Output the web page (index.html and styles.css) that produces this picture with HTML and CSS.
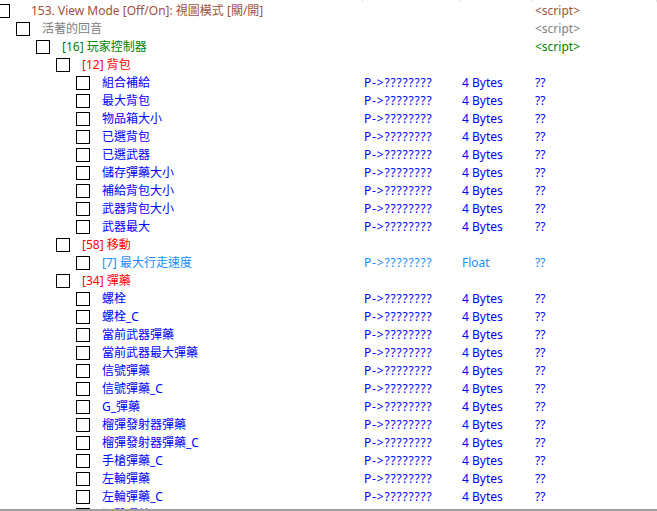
FILE: index.html
```html
<!DOCTYPE html>
<html lang="zh-Hant">
  <head>
    <meta charset="UTF-8" />
    <title>Cheat Table</title>
    <link rel="stylesheet" href="styles.css">
  </head>
  <body>
    <div class="table">
      <div class="head">
        <div class="hcell"></div>
        <div class="hcell"></div>
        <div class="hcell"></div>
        <div class="hcell"></div>
      </div>

      <div class="row lv0 c-script">
        <div class="desc"><span class="box"></span><span class="label">153. View Mode [Off/On]: 視圖模式 [關/開]</span></div>
        <div></div><div></div><div class="val">&lt;script&gt;</div>
      </div>
      <div class="row lv1 c-gray">
        <div class="desc"><span class="box"></span><span class="label">活著的回音</span></div>
        <div></div><div></div><div class="val">&lt;script&gt;</div>
      </div>
      <div class="row lv2 c-green">
        <div class="desc"><span class="box"></span><span class="label">[16] 玩家控制器</span></div>
        <div></div><div></div><div class="val">&lt;script&gt;</div>
      </div>
      <div class="row lv3 c-red">
        <div class="desc"><span class="box"></span><span class="label">[12] 背包</span></div>
      </div>

      <div class="row lv4 c-blue"><div class="desc"><span class="box"></span><span class="label">組合補給</span></div><div class="addr">P-&gt;????????</div><div class="type">4 Bytes</div><div class="val">??</div></div>
      <div class="row lv4 c-blue"><div class="desc"><span class="box"></span><span class="label">最大背包</span></div><div class="addr">P-&gt;????????</div><div class="type">4 Bytes</div><div class="val">??</div></div>
      <div class="row lv4 c-blue"><div class="desc"><span class="box"></span><span class="label">物品箱大小</span></div><div class="addr">P-&gt;????????</div><div class="type">4 Bytes</div><div class="val">??</div></div>
      <div class="row lv4 c-blue"><div class="desc"><span class="box"></span><span class="label">已選背包</span></div><div class="addr">P-&gt;????????</div><div class="type">4 Bytes</div><div class="val">??</div></div>
      <div class="row lv4 c-blue"><div class="desc"><span class="box"></span><span class="label">已選武器</span></div><div class="addr">P-&gt;????????</div><div class="type">4 Bytes</div><div class="val">??</div></div>
      <div class="row lv4 c-blue"><div class="desc"><span class="box"></span><span class="label">儲存彈藥大小</span></div><div class="addr">P-&gt;????????</div><div class="type">4 Bytes</div><div class="val">??</div></div>
      <div class="row lv4 c-blue"><div class="desc"><span class="box"></span><span class="label">補給背包大小</span></div><div class="addr">P-&gt;????????</div><div class="type">4 Bytes</div><div class="val">??</div></div>
      <div class="row lv4 c-blue"><div class="desc"><span class="box"></span><span class="label">武器背包大小</span></div><div class="addr">P-&gt;????????</div><div class="type">4 Bytes</div><div class="val">??</div></div>
      <div class="row lv4 c-blue"><div class="desc"><span class="box"></span><span class="label">武器最大</span></div><div class="addr">P-&gt;????????</div><div class="type">4 Bytes</div><div class="val">??</div></div>

      <div class="row lv3 c-red">
        <div class="desc"><span class="box"></span><span class="label">[58] 移動</span></div>
      </div>
      <div class="row lv4 c-sky"><div class="desc"><span class="box"></span><span class="label">[7] 最大行走速度</span></div><div class="addr">P-&gt;????????</div><div class="type">Float</div><div class="val">??</div></div>

      <div class="row lv3 c-red">
        <div class="desc"><span class="box"></span><span class="label">[34] 彈藥</span></div>
      </div>
      <div class="row lv4 c-blue"><div class="desc"><span class="box"></span><span class="label">螺栓</span></div><div class="addr">P-&gt;????????</div><div class="type">4 Bytes</div><div class="val">??</div></div>
      <div class="row lv4 c-blue"><div class="desc"><span class="box"></span><span class="label">螺栓_C</span></div><div class="addr">P-&gt;????????</div><div class="type">4 Bytes</div><div class="val">??</div></div>
      <div class="row lv4 c-blue"><div class="desc"><span class="box"></span><span class="label">當前武器彈藥</span></div><div class="addr">P-&gt;????????</div><div class="type">4 Bytes</div><div class="val">??</div></div>
      <div class="row lv4 c-blue"><div class="desc"><span class="box"></span><span class="label">當前武器最大彈藥</span></div><div class="addr">P-&gt;????????</div><div class="type">4 Bytes</div><div class="val">??</div></div>
      <div class="row lv4 c-blue"><div class="desc"><span class="box"></span><span class="label">信號彈藥</span></div><div class="addr">P-&gt;????????</div><div class="type">4 Bytes</div><div class="val">??</div></div>
      <div class="row lv4 c-blue"><div class="desc"><span class="box"></span><span class="label">信號彈藥_C</span></div><div class="addr">P-&gt;????????</div><div class="type">4 Bytes</div><div class="val">??</div></div>
      <div class="row lv4 c-blue"><div class="desc"><span class="box"></span><span class="label">G_彈藥</span></div><div class="addr">P-&gt;????????</div><div class="type">4 Bytes</div><div class="val">??</div></div>
      <div class="row lv4 c-blue"><div class="desc"><span class="box"></span><span class="label">榴彈發射器彈藥</span></div><div class="addr">P-&gt;????????</div><div class="type">4 Bytes</div><div class="val">??</div></div>
      <div class="row lv4 c-blue"><div class="desc"><span class="box"></span><span class="label">榴彈發射器彈藥_C</span></div><div class="addr">P-&gt;????????</div><div class="type">4 Bytes</div><div class="val">??</div></div>
      <div class="row lv4 c-blue"><div class="desc"><span class="box"></span><span class="label">手槍彈藥_C</span></div><div class="addr">P-&gt;????????</div><div class="type">4 Bytes</div><div class="val">??</div></div>
      <div class="row lv4 c-blue"><div class="desc"><span class="box"></span><span class="label">左輪彈藥</span></div><div class="addr">P-&gt;????????</div><div class="type">4 Bytes</div><div class="val">??</div></div>
      <div class="row lv4 c-blue"><div class="desc"><span class="box"></span><span class="label">左輪彈藥_C</span></div><div class="addr">P-&gt;????????</div><div class="type">4 Bytes</div><div class="val">??</div></div>
      <div class="row lv4 c-blue"><div class="desc"><span class="box"></span><span class="label">狙擊彈藥</span></div><div class="addr">P-&gt;????????</div><div class="type">4 Bytes</div><div class="val">??</div></div>
    </div>
    <div class="splitter"></div>
  </body>
</html>
```

FILE: styles.css
```css
html,
body {
  margin: 0;
  padding: 0;
  background: #fff;
  overflow: hidden;
}

body {
  font-family: "Noto Sans", "Noto Sans CJK TC", sans-serif;
  font-size: 12px;
  width: 657px;
  height: 511px;
}

.table {
  height: 509px;
  overflow: hidden;
}

.head,
.row {
  display: grid;
  grid-template-columns: 363px 98px 72px 1fr;
}

.head {
  height: 2px;
}

.hcell {
  border-right: 1px solid #e3e3e3;
}

.row {
  height: 18px;
  line-height: 18px;
  white-space: nowrap;
}

.desc {
  display: flex;
  align-items: center;
  overflow: hidden;
}

.box {
  box-sizing: border-box;
  width: 14px;
  height: 14px;
  border: 1px solid #000;
  background: #fff;
  flex-shrink: 0;
  margin-right: 12px;
}

.addr {
  padding-left: 1px;
  letter-spacing: 0.8px;
}

.type {
  padding-left: 1px;
}

.val {
  padding-left: 2px;
}

.lv0 .box {
  margin-left: -4px;
  margin-right: 21px;
}
.lv1 .desc { padding-left: 16px; }
.lv2 .desc { padding-left: 36px; }
.lv3 .desc { padding-left: 56px; }
.lv4 .desc { padding-left: 76px; }

.c-script { color: #a0503c; }
.c-gray { color: #808080; }
.c-green { color: #008000; }
.c-red { color: #ff0000; }
.c-blue { color: #0000ff; }
.c-sky { color: #1a8cff; }

.splitter {
  height: 2px;
  background: #a0a0a0;
}
```
